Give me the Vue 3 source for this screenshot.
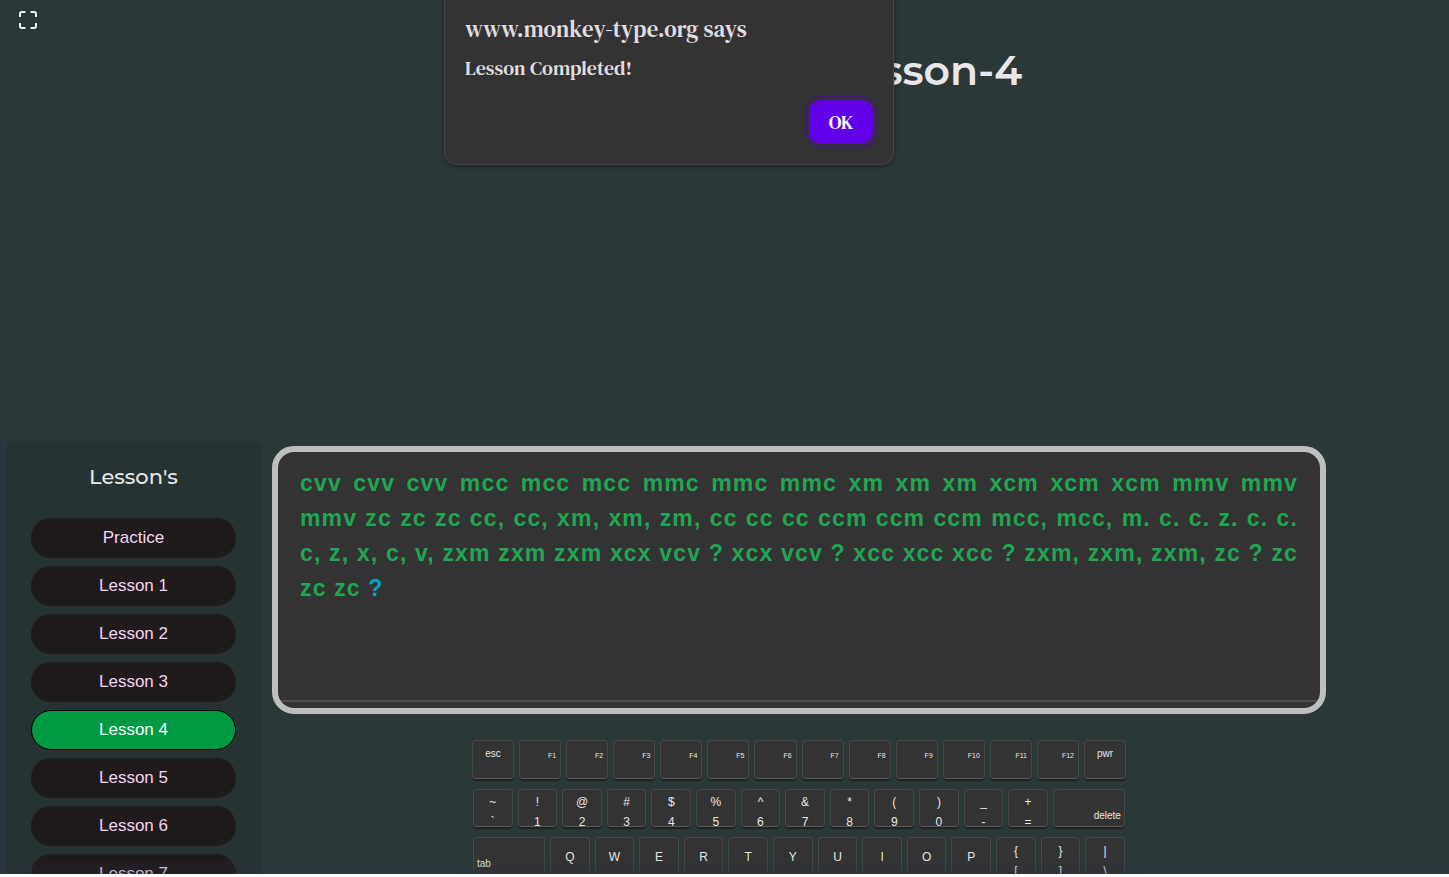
<script setup>
import { ref } from 'vue'

const lessons = ['Practice', 'Lesson 1', 'Lesson 2', 'Lesson 3', 'Lesson 4', 'Lesson 5', 'Lesson 6', 'Lesson 7']
const active = ref('Lesson 4')

const typed =
  'cvv cvv cvv mcc mcc mcc mmc mmc mmc xm xm xm xcm xcm xcm mmv mmv ' +
  'mmv zc zc zc cc, cc, xm, xm, zm, cc cc cc ccm ccm ccm mcc, mcc, m. c. c. z. c. c. ' +
  'c, z, x, c, v, zxm zxm zxm xcx vcv ? xcx vcv ? xcc xcc xcc ? zxm, zxm, zxm, zc ? zc ' +
  'zc zc '

const functionKeys = Array.from({ length: 12 }, (_, i) => `F${i + 1}`)
const numberKeys = [
  ['~', '`'], ['!', '1'], ['@', '2'], ['#', '3'], ['$', '4'], ['%', '5'], ['^', '6'],
  ['&', '7'], ['*', '8'], ['(', '9'], [')', '0'], ['_', '-'], ['+', '='],
]
const letterKeys = 'QWERTYUIOP'.split('')
const bracketKeys = [['{', '['], ['}', ']'], ['|', '\\']]
</script>

<template>
  <div class="page">
    <header class="top">
      <button class="fullscreen" aria-label="Toggle fullscreen">
        <svg viewBox="0 0 18 18" width="18" height="18" fill="none" stroke="#f2efe9" stroke-width="2">
          <path d="M1 6V3Q1 1 3 1H6.500M11.500 1H15Q17 1 17 3V6M17 12V15Q17 17 15 17H11.500M6.500 17H3Q1 17 1 15V12" />
        </svg>
      </button>
      <h1>Lesson-4</h1>
    </header>

    <div class="dialog" role="alertdialog" aria-labelledby="dialog-title" aria-describedby="dialog-text">
      <h2 id="dialog-title">www.monkey-type.org says</h2>
      <p id="dialog-text">Lesson Completed!</p>
      <button class="ok">OK</button>
    </div>

    <main class="main">
      <nav class="sidebar" aria-label="Lessons">
        <h2>Lesson's</h2>
        <button
          v-for="lesson in lessons"
          :key="lesson"
          class="lesson"
          :class="{ active: lesson === active }"
          @click="active = lesson"
        >{{ lesson }}</button>
      </nav>

      <section class="work">
        <div class="board">
          <p class="text">{{ typed }}<span class="current">?</span></p>
        </div>

        <div class="keyboard">
          <div class="row functions">
            <button class="key named">esc</button>
            <button v-for="k in functionKeys" :key="k" class="key fn">{{ k }}</button>
            <button class="key named">pwr</button>
          </div>
          <div class="row">
            <button v-for="k in numberKeys" :key="k[1]" class="key pair">
              <span>{{ k[0] }}</span><span>{{ k[1] }}</span>
            </button>
            <button class="key wide end">delete</button>
          </div>
          <div class="row">
            <button class="key wide start">tab</button>
            <button v-for="k in letterKeys" :key="k" class="key letter">{{ k }}</button>
            <button v-for="k in bracketKeys" :key="k[1]" class="key pair bracket">
              <span>{{ k[0] }}</span><span>{{ k[1] }}</span>
            </button>
          </div>
        </div>
      </section>
    </main>
  </div>
</template>

<style>
body {
  background: #fff;
  overflow: hidden;
}
</style>

<style scoped>
* {
  box-sizing: border-box;
  margin: 0;
}

button {
  border: 0;
  padding: 0;
  font-family: inherit;
  cursor: pointer;
}

.page {
  position: relative;
  display: flex;
  flex-direction: column;
  height: calc(100vh - 3px);
  overflow: hidden;
  font-family: "Liberation Sans", Arial, sans-serif;
  background: #2b3838;
}

.page::after {
  content: "";
  position: absolute;
  inset: auto 0 0;
  height: 16px;
  background: linear-gradient(transparent, rgba(42, 46, 70, 0.3));
  pointer-events: none;
}

.top {
  flex: none;
  display: flex;
  justify-content: space-between;
  align-items: flex-start;
  height: 441px;
  padding: 11px 427px 0 19px;
}

.fullscreen {
  display: flex;
  background: none;
}

h1 {
  margin-top: 34px;
  font: 600 41px/50px Montserrat, Inter, sans-serif;
  color: #e9e6e9;
}

.dialog {
  position: absolute;
  top: -12px;
  left: 444px;
  display: flex;
  flex-direction: column;
  width: 450px;
  padding: 23px 20px 20px;
  border: 1px solid #48444d;
  border-radius: 12px;
  background: #333;
  box-shadow: 0 1px 4px rgba(0, 0, 0, 0.4);
  font-family: "DM Serif Text", "Liberation Serif", serif;
  color: #e0dde0;
}

.dialog h2 {
  font-size: 23px;
  font-weight: 400;
  line-height: 34px;
}

.dialog p {
  margin-top: 9px;
  font-size: 20px;
  font-weight: 400;
  line-height: 26px;
}

.ok {
  align-self: flex-end;
  width: 64px;
  height: 44px;
  margin-top: 19px;
  border-radius: 12px;
  background: #6200ea;
  outline: 2px solid #401b72;
  outline-offset: 2px;
  font-size: 19px;
  font-weight: 400;
  color: #fff;
}

.main {
  flex: 1;
  display: flex;
  gap: 11px;
  min-height: 0;
  padding: 0 123px 0 6px;
  background: linear-gradient(to right, #28353f, #2b3838 10px);
}

.sidebar {
  flex: none;
  display: flex;
  flex-direction: column;
  gap: 8px;
  width: 255px;
  padding: 21px 25px 0;
  border-radius: 6px 6px 0 0;
  background: #273232;
}

.sidebar h2 {
  margin-bottom: 18px;
  font: 500 21px/30px Montserrat, Inter, sans-serif;
  text-align: center;
  color: #e9e6e9;
}

.lesson {
  flex: none;
  height: 40px;
  border-radius: 20px;
  background: #201b1b;
  font-size: 17px;
  color: #f3d3fa;
}

.lesson.active {
  border: 1px solid #000;
  background: #009944;
  color: #fff;
}

.work {
  flex: 1;
  min-width: 0;
  padding-top: 5px;
}

.board {
  height: 268px;
  padding: 14px 22px 0;
  border: 6px solid #c0bfc0;
  border-radius: 22px;
  background: linear-gradient(#4d4d4d, #4d4d4d) 0 248px / 100% 2px no-repeat #333;
}

.text {
  font-size: 23px;
  font-weight: 700;
  line-height: 35px;
  letter-spacing: 0.05em;
  text-align: justify;
  color: #1fa653;
}

.current {
  color: #00a5c4;
}

.keyboard {
  display: flex;
  flex-direction: column;
  gap: 10px;
  width: 652px;
  margin: 26px auto 0;
}

.row {
  display: flex;
  gap: 5px;
}

.functions {
  margin: 0 -1px;
}

.key {
  flex: 1 1 0;
  min-width: 0;
  height: 38px;
  border: 1px solid #484848;
  border-bottom-color: #5a5a5a;
  border-radius: 4px;
  background: #333;
  box-shadow: 0 2px 1px #222;
  font-size: 12px;
  color: #e6e6e6;
}

.functions .key {
  height: 39px;
}

.named {
  padding: 0 2px 13px;
  font-size: 10px;
}

.fn {
  padding: 0 4px 8px 0;
  font-size: 7px;
  text-align: right;
}

.pair {
  display: flex;
  flex-direction: column;
  align-items: center;
  padding-top: 2px;
  line-height: 20px;
}

.bracket {
  padding-top: 3px;
}

.letter {
  padding-top: 2px;
}

.wide {
  flex: 0 0 72px;
  padding: 14px 3px 0;
  font-size: 10px;
}

.end {
  text-align: right;
}

.start {
  text-align: left;
}
</style>
